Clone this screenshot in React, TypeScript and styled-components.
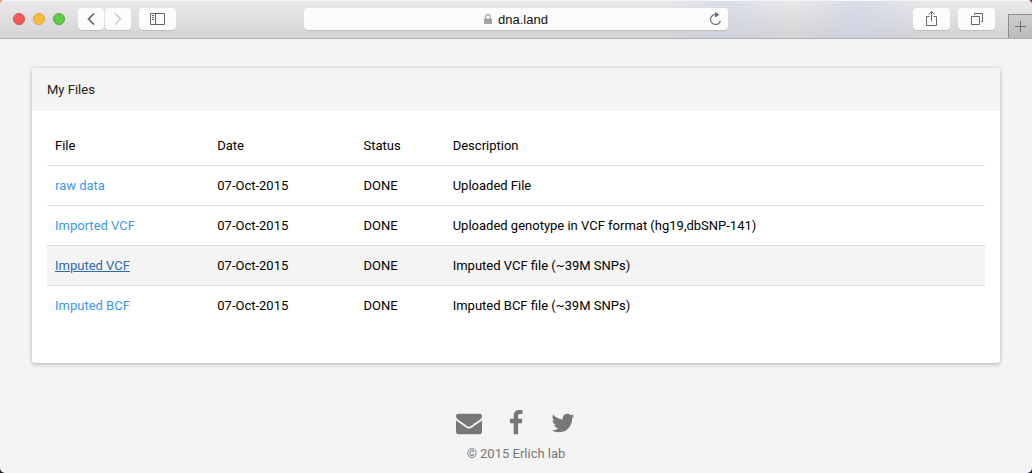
import React from "react";
import styled, { createGlobalStyle } from "styled-components";

const GlobalStyle = createGlobalStyle`
  *, *::before, *::after { box-sizing: border-box; }
  body {
    margin: 0;
    background:
      linear-gradient(transparent 50%, #1b1f30 90%),
      linear-gradient(90deg, #d9a06c 0%, #8c2f52 100%);
    font-family: Roboto, "Liberation Sans", sans-serif;
    font-size: 13px;
    line-height: 23px;
    color: #000;
  }
`;

const Window = styled.div`
  display: flex;
  flex-direction: column;
  min-height: 100vh;
  background: #f4f4f4;
  border-radius: 5px;
  overflow: hidden;
`;

const Toolbar = styled.header`
  display: grid;
  grid-template-columns: 1fr 41% 1fr;
  align-items: center;
  height: 39px;
  border-bottom: 1px solid #b1afb1;
  box-shadow: inset 0 1px 0 #f6f5f6;
  background:
    linear-gradient(90deg, transparent 64%, rgba(196, 208, 232, 0.4) 70%, transparent 77%, rgba(190, 205, 232, 0.4) 83%, transparent 90%),
    linear-gradient(#eae8ea, #d5d3d5);
`;

const ToolGroup = styled.div<{ $end?: boolean }>`
  display: flex;
  align-items: center;
  align-self: stretch;
  gap: 8px;
  justify-content: ${(p) => (p.$end ? "flex-end" : "flex-start")};
  padding-left: ${(p) => (p.$end ? 0 : 13)}px;
`;

const Lights = styled.div`
  display: flex;
  gap: 8px;
  margin-right: 5px;
`;

const Light = styled.button<{ $fill: string; $edge: string }>`
  width: 12px;
  height: 12px;
  padding: 0;
  border: 1px solid ${(p) => p.$edge};
  border-radius: 50%;
  background: ${(p) => p.$fill};
`;

const History = styled.div`
  display: flex;
  gap: 1px;
`;

const ToolButton = styled.button<{ $narrow?: boolean }>`
  display: flex;
  align-items: center;
  justify-content: center;
  width: ${(p) => (p.$narrow ? 26 : 37)}px;
  height: 22px;
  padding: 0;
  border: 0;
  border-radius: 4px;
  background: #fcfcfc;
  box-shadow: 0 1px 0 #bfbdbf;
  color: #666;

  &:disabled {
    color: #ccc;
  }
`;

const NewTab = styled.button`
  display: flex;
  align-items: center;
  justify-content: center;
  align-self: flex-end;
  width: 24px;
  height: 24px;
  margin-left: 5px;
  padding: 0;
  border: 1px solid #8f8d8f;
  border-width: 1px 0 0 1px;
  background: linear-gradient(#cfcdcf, #bdbbbd);
  color: #6f6d6f;
`;

const Address = styled.div`
  display: grid;
  grid-template-columns: 24px 1fr 24px;
  align-items: center;
  height: 22px;
  border-radius: 4px;
  background: #fcfcfc;
  box-shadow: 0 1px 0 #bfbdbf;
`;

const Site = styled.label`
  grid-column: 2;
  display: flex;
  align-items: center;
  justify-content: center;
  gap: 6px;
`;

const SiteInput = styled.input`
  field-sizing: content;
  height: 22px;
  padding: 0;
  border: 0;
  outline: 0;
  background: transparent;
  font: 13px "Liberation Sans", sans-serif;
  color: #111;
`;

const Reload = styled.button`
  display: flex;
  justify-content: center;
  padding: 0;
  border: 0;
  background: none;
  color: #6b6b6b;
`;

const Content = styled.main`
  padding: 29px 32px 0;
`;

const Card = styled.section`
  border-radius: 3px;
  background: #fff;
  box-shadow: 0 1px 4px rgba(0, 0, 0, 0.3);
`;

const CardTitle = styled.h1`
  margin: 0;
  padding: 10px 15px;
  border-radius: 3px 3px 0 0;
  background: #f4f4f4;
  font-size: 13px;
  font-weight: 400;
  color: #212121;
`;

const CardBody = styled.div`
  padding: 15px 15px 38px;
`;

const Files = styled.table`
  width: 100%;
  table-layout: fixed;
  border-spacing: 0;
`;

const HeadCell = styled.th<{ $width?: string }>`
  width: ${(p) => p.$width ?? "auto"};
  padding: 8px;
  font-weight: 400;
  text-align: left;
`;

const Row = styled.tr<{ $active?: boolean }>`
  background: ${(p) => (p.$active ? "#f4f4f4" : "transparent")};
`;

const Cell = styled.td`
  padding: 8px;
  border-top: 1px solid #dcdcdc;
`;

const FileLink = styled.a<{ $active?: boolean }>`
  color: ${(p) => (p.$active ? "#2a6db5" : "#3a99ee")};
  text-decoration: ${(p) => (p.$active ? "underline" : "none")};
`;

const Footer = styled.footer`
  display: flex;
  flex-direction: column;
  align-items: center;
  padding: 47px 32px 8px;
  color: #777;
`;

const Social = styled.nav`
  display: flex;
  gap: 21px;
  margin-bottom: 6px;
`;

const SocialLink = styled.a`
  display: block;
  height: 26px;
  color: #777;
`;

const Copyright = styled.small`
  font-size: 13px;
`;

const files = [
  { name: "raw data", description: "Uploaded File" },
  { name: "Imported VCF", description: "Uploaded genotype in VCF format (hg19,dbSNP-141)" },
  { name: "Imputed VCF", description: "Imputed VCF file (~39M SNPs)", active: true },
  { name: "Imputed BCF", description: "Imputed BCF file (~39M SNPs)" },
];

const social = [
  {
    label: "Email",
    path: "M1792 710v794q0 66-47 113t-113 47h-1472q-66 0-113-47t-47-113v-794q44 49 101 87 362 246 497 345 57 42 92.5 65.5t94.5 48 110 24.5h2q51 0 110-24.5t94.5-48 92.5-65.5q170-123 498-345 57-39 100-87zm0-294q0 79-49 151t-122 123q-376 261-468 325-10 7-42.5 31t-54 38.5-52 32.5-57.5 27-50 9h-2q-23 0-50-9t-57.5-27-52-32.5-54-38.5-42.5-31q-91-64-262-182.5t-205-142.5q-62-42-117-115.5t-55-136.5q0-78 41.5-130t118.5-52h1472q65 0 112.5 47t47.5 113z",
  },
  {
    label: "Facebook",
    path: "M1343 12v264h-157q-86 0-116 36t-30 108v189h293l-39 296h-254v759h-306v-759h-255v-296h255v-218q0-186 104-288.5t277-102.5q147 0 228 12z",
  },
  {
    label: "Twitter",
    path: "M1684 408q-67 98-162 167 1 14 1 42 0 130-38 259.5t-115.5 248.5-184.5 210.5-258 146-323 54.5q-271 0-496-145 35 4 78 4 225 0 401-138-105-2-188-64.5t-114-159.5q33 5 61 5 43 0 85-11-112-23-185.5-111.5t-73.5-205.5v-4q68 38 146 41-66-44-105-115t-39-154q0-88 44-163 121 149 294.5 238.5t371.5 99.5q-8-38-8-74 0-134 94.5-228.5t228.5-94.5q140 0 236 102 109-21 205-78-37 115-142 178 93-10 186-50z",
  },
];

function BrowserBar() {
  return (
    <Toolbar>
      <ToolGroup>
        <Lights>
          <Light aria-label="Close" $fill="#ee5b56" $edge="#d94f4b" />
          <Light aria-label="Minimize" $fill="#f6bd3e" $edge="#dea236" />
          <Light aria-label="Zoom" $fill="#62ca44" $edge="#4fae35" />
        </Lights>
        <History>
          <ToolButton $narrow aria-label="Back">
            <svg width="8" height="12" viewBox="0 0 8 12" fill="none" stroke="currentColor" strokeWidth="1.7">
              <path d="M7 .5 1.500 6 7 11.500" />
            </svg>
          </ToolButton>
          <ToolButton $narrow disabled aria-label="Forward">
            <svg width="8" height="12" viewBox="0 0 8 12" fill="none" stroke="currentColor" strokeWidth="1.5">
              <path d="M1 .5 6.500 6 1 11.500" />
            </svg>
          </ToolButton>
        </History>
        <ToolButton aria-label="Show sidebar">
          <svg width="15" height="12" viewBox="0 0 15 12" fill="none" stroke="currentColor">
            <path d="M.5.5h14v11H.5zM5.500.5v11M2 2.500h2M2 4.500h2M2 6.500h2" />
          </svg>
        </ToolButton>
      </ToolGroup>
      <Address>
        <Site>
          <svg width="8" height="10" viewBox="0 0 8 10" aria-hidden="true">
            <path d="M1.700 5V3a2.300 2.300 0 0 1 4.600 0v2" fill="none" stroke="#a3a3a3" strokeWidth="1.200" />
            <rect y="4.500" width="8" height="5.500" rx=".5" fill="#a3a3a3" />
          </svg>
          <SiteInput aria-label="Address" defaultValue="dna.land" size={7} />
        </Site>
        <Reload aria-label="Reload">
          <svg width="13" height="14" viewBox="0 0 13 14">
            <path d="M6.500 2.500a5 5 0 1 0 5 5" fill="none" stroke="currentColor" strokeWidth="1.200" transform="rotate(12 6.500 7.500)" />
            <path d="M6 0l4.500 2.800L6 5.500z" fill="currentColor" />
          </svg>
        </Reload>
      </Address>
      <ToolGroup $end>
        <ToolButton aria-label="Share">
          <svg width="11" height="16" viewBox="0 0 11 16" fill="none" stroke="currentColor">
            <path d="M3.500 5.500H.5v9h10v-9h-3M5.500 10V1M2.500 3.500l3-3 3 3" />
          </svg>
        </ToolButton>
        <ToolButton aria-label="Show all tabs">
          <svg width="13" height="12" viewBox="0 0 13 12" fill="none" stroke="currentColor">
            <path d="M1.500 3.500h8v8h-8zM4.500 2V.5h8v8H11" />
          </svg>
        </ToolButton>
        <NewTab aria-label="New tab">
          <svg width="11" height="11" viewBox="0 0 11 11" stroke="currentColor">
            <path d="M5.500 0v11M0 5.500h11" />
          </svg>
        </NewTab>
      </ToolGroup>
    </Toolbar>
  );
}

export default function App() {
  return (
    <>
      <GlobalStyle />
      <Window>
        <BrowserBar />
        <Content>
          <Card>
            <CardTitle>My Files</CardTitle>
            <CardBody>
              <Files>
                <thead>
                  <tr>
                    <HeadCell $width="17.3%">File</HeadCell>
                    <HeadCell $width="15.6%">Date</HeadCell>
                    <HeadCell $width="9.5%">Status</HeadCell>
                    <HeadCell>Description</HeadCell>
                  </tr>
                </thead>
                <tbody>
                  {files.map((f) => (
                    <Row key={f.name} $active={f.active}>
                      <Cell>
                        <FileLink href="#" $active={f.active}>
                          {f.name}
                        </FileLink>
                      </Cell>
                      <Cell>07-Oct-2015</Cell>
                      <Cell>DONE</Cell>
                      <Cell>{f.description}</Cell>
                    </Row>
                  ))}
                </tbody>
              </Files>
            </CardBody>
          </Card>
        </Content>
        <Footer>
          <Social>
            {social.map((s) => (
              <SocialLink key={s.label} href="#" aria-label={s.label}>
                <svg width="26" height="26" viewBox="0 0 1792 1792" fill="currentColor">
                  <path d={s.path} />
                </svg>
              </SocialLink>
            ))}
          </Social>
          <Copyright>© 2015 Erlich lab</Copyright>
        </Footer>
      </Window>
    </>
  );
}
